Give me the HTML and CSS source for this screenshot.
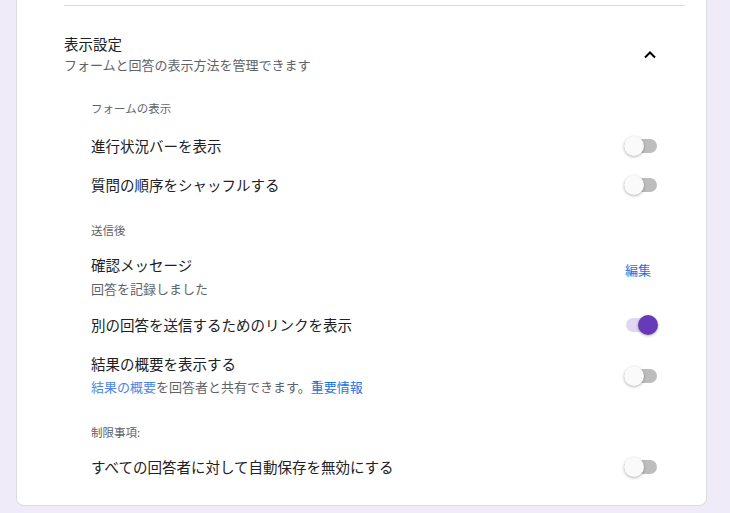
FILE: index.html
```html
<!DOCTYPE html>
<html lang="ja">
<head>
    <meta charset="UTF-8">
    <title>表示設定</title>
    <link rel="stylesheet" href="styles.css">
</head>
<body>
<div class="card">
    <div class="divider"></div>
    <div class="section-head">
        <div class="head-text">
            <div class="head-title">表示設定</div>
            <div class="head-sub">フォームと回答の表示方法を管理できます</div>
        </div>
        <div class="chevron">
            <svg width="24" height="24" viewBox="0 0 24 24">
                <polyline points="7,14.5 12,9.5 17,14.5" fill="none" stroke="#000" stroke-width="2"/>
            </svg>
        </div>
    </div>
    <div class="settings">
        <div class="group-label first">フォームの表示</div>
        <div class="row first-row">
            <div class="row-title">進行状況バーを表示</div>
            <div class="toggle"><span class="track"></span><span class="thumb"></span></div>
        </div>
        <div class="row">
            <div class="row-title">質問の順序をシャッフルする</div>
            <div class="toggle"><span class="track"></span><span class="thumb"></span></div>
        </div>

        <div class="group-label">送信後</div>
        <div class="row two-line confirm">
            <div class="row-text">
                <div class="row-title">確認メッセージ</div>
                <div class="row-sub">回答を記録しました</div>
            </div>
            <a href="#" class="edit-link">編集</a>
        </div>
        <div class="row">
            <div class="row-title">別の回答を送信するためのリンクを表示</div>
            <div class="toggle on"><span class="track"></span><span class="thumb"></span></div>
        </div>
        <div class="row two-line">
            <div class="row-text">
                <div class="row-title">結果の概要を表示する</div>
                <div class="row-sub"><span class="soft-link">結果の概要</span>を回答者と共有できます。<a href="#" class="link">重要情報</a></div>
            </div>
            <div class="toggle"><span class="track"></span><span class="thumb"></span></div>
        </div>

        <div class="group-label limits">制限事項:</div>
        <div class="row last-row">
            <div class="row-title">すべての回答者に対して自動保存を無効にする</div>
            <div class="toggle"><span class="track"></span><span class="thumb"></span></div>
        </div>
    </div>
</div>
</body>
</html>
```

FILE: styles.css
```css
body {
    margin: 0;
    background: #f0ebf8;
    font-family: "Noto Sans CJK JP", "Noto Sans", sans-serif;
    color: #202124;
}

.card {
    box-sizing: border-box;
    width: 691px;
    margin-left: 16px;
    padding: 5px 21px 19px 47px;
    background: #fff;
    border: 1px solid #dadce0;
    border-top: none;
    border-radius: 0 0 8px 8px;
}

.divider {
    height: 1px;
    background: #dadce0;
}

.section-head {
    display: flex;
    align-items: center;
    padding-top: 28px;
}

.head-text {
    flex: 1;
}

.head-title {
    font-size: 14.5px;
    line-height: 20px;
}

.head-sub {
    margin-top: 1px;
    font-size: 13px;
    line-height: 20px;
    color: #5f6368;
}

.chevron {
    width: 24px;
    height: 24px;
    margin-right: 23px;
}

.chevron svg {
    display: block;
}

.settings {
    padding: 0 27px;
}

.group-label {
    margin-top: 18px;
    font-size: 11.5px;
    line-height: 16px;
    color: #5f6368;
}

.group-label.first {
    margin-top: 25px;
}

.group-label.limits {
    margin-top: 17px;
}

.row {
    display: flex;
    align-items: center;
    justify-content: space-between;
    height: 39px;
}

.row.first-row {
    margin-top: 10px;
}

.row.last-row {
    margin-top: 7px;
}

.row.two-line {
    height: auto;
    padding: 10px 0;
}

.row.confirm {
    align-items: flex-start;
    padding: 17px 0 6px;
}

.row-title {
    font-size: 14.5px;
    line-height: 20px;
}

.row-sub {
    margin-top: 3px;
    font-size: 13px;
    line-height: 20px;
    color: #5f6368;
}

.confirm .row-sub {
    margin-top: 4px;
}

.soft-link {
    color: #4a86e8;
}

.link,
.edit-link {
    color: #1a73e8;
    text-decoration: none;
}

.edit-link {
    margin: 5px 7px 0 0;
    font-size: 13px;
    line-height: 20px;
}

.toggle {
    position: relative;
    width: 34px;
    height: 20px;
}

.toggle .track {
    position: absolute;
    left: 0;
    right: 1px;
    top: 3px;
    height: 14px;
    border-radius: 7px;
    background: #bdbdbd;
}

.toggle .thumb {
    position: absolute;
    left: 0;
    top: 0;
    width: 20px;
    height: 20px;
    border-radius: 50%;
    background: #fafafa;
    box-shadow: 0 1px 3px rgba(0, 0, 0, 0.3);
}

.toggle.on .track {
    left: 2px;
    background: #e0d7f0;
}

.toggle.on .thumb {
    left: 14px;
    background: #673ab7;
}
```
